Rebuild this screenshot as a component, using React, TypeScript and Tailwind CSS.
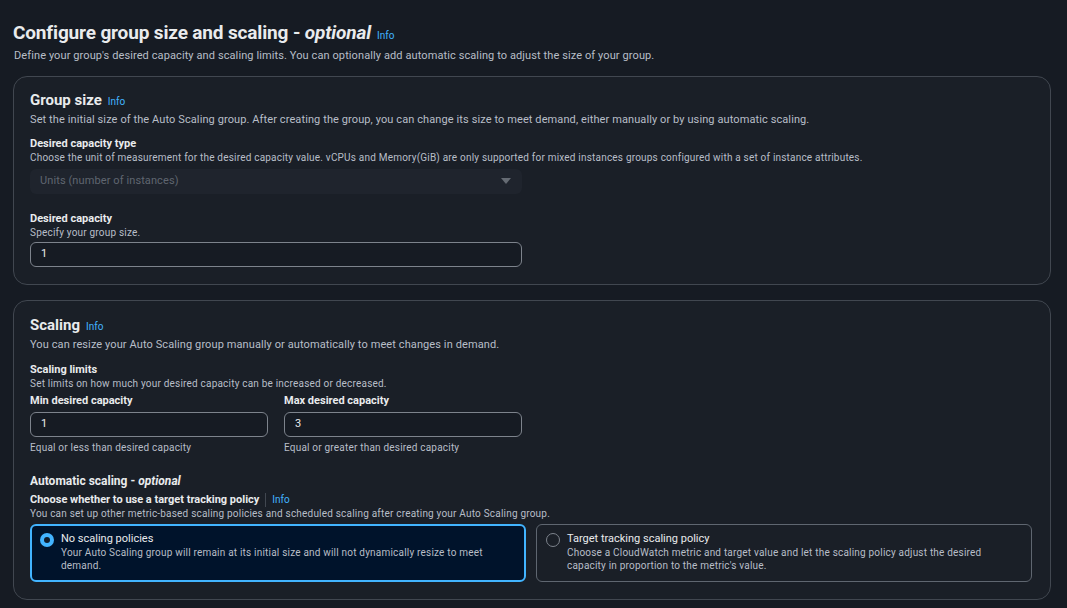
const font = { fontFamily: 'Roboto, "Open Sans", sans-serif' };

function Info() {
  return <span className="ml-[6px] text-[10px] font-normal text-[#42b4ff] tracking-normal">Info</span>;
}

function Field({ label, hint }: { label: string; hint?: string }) {
  return (
    <div>
      <div className="text-[11px] font-bold leading-[14px] text-[#e9ebed]">{label}</div>
      {hint && <div className="text-[10px] leading-[13px] tracking-[0.2px] text-[#b8bec7]">{hint}</div>}
    </div>
  );
}

function TextInput({ value, className }: { value: string; className?: string }) {
  return (
    <div
      className={
        'flex h-[25px] items-center rounded-[6px] border border-[#7d838c] bg-[#161b23] px-[10px] text-[11px] text-[#e9ebed] ' +
        (className ?? '')
      }
    >
      {value}
    </div>
  );
}

function Radio({ checked }: { checked: boolean }) {
  return checked ? (
    <span className="mt-[1px] flex h-[14px] w-[14px] shrink-0 items-center justify-center rounded-full bg-[#42b4ff]">
      <span className="h-[6px] w-[6px] rounded-full bg-[#0f1b2a]" />
    </span>
  ) : (
    <span className="mt-[1px] h-[14px] w-[14px] shrink-0 rounded-full border border-[#7d838c]" />
  );
}

export default function App() {
  return (
    <div style={font} className="min-h-screen bg-[#161b23] px-[13px] pt-[21px] pb-[8px]">
      <h1 className="flex items-baseline text-[19px] font-bold leading-[24px] tracking-[-0.15px] text-[#e9ebed]">
        Configure group size and scaling -&nbsp;<i className="font-bold">optional</i>
        <Info />
      </h1>
      <p className="mt-[1px] pl-[1px] text-[11px] leading-[14px] tracking-[0.1px] text-[#b8bec7]">
        Define your group's desired capacity and scaling limits. You can optionally add automatic scaling to adjust the size of your group.
      </p>

      <section className="mt-[13px] h-[209px] w-[1038px] rounded-[14px] border border-[#414750] bg-[#1a1f27] px-[16px] pt-[13px]">
        <h2 className="flex items-baseline text-[15px] font-bold leading-[20px] text-[#e9ebed]">
          Group size
          <Info />
        </h2>
        <p className="mt-[1px] text-[11px] leading-[14px] tracking-[0.1px] text-[#b8bec7]">
          Set the initial size of the Auto Scaling group. After creating the group, you can change its size to meet demand, either manually or by using automatic scaling.
        </p>

        <div className="mt-[10px]">
          <Field
            label="Desired capacity type"
            hint="Choose the unit of measurement for the desired capacity value. vCPUs and Memory(GiB) are only supported for mixed instances groups configured with a set of instance attributes."
          />
          <div className="mt-[5px] flex h-[25px] w-[492px] items-center justify-between rounded-[6px] bg-[#1f242d] pl-[10px] pr-[11px] text-[11px] tracking-[0.1px] text-[#5f6670]">
            <span>Units (number of instances)</span>
            <svg width="10" height="7" viewBox="0 0 10 7">
              <path d="M0 0h10L5 6z" fill="#656b73" />
            </svg>
          </div>
        </div>

        <div className="mt-[18px] w-[492px]">
          <Field label="Desired capacity" hint="Specify your group size." />
          <TextInput value="1" className="mt-[3px]" />
        </div>
      </section>

      <section className="mt-[15px] h-[300px] w-[1038px] rounded-[14px] border border-[#414750] bg-[#1a1f27] px-[16px] pt-[14px]">
        <h2 className="flex items-baseline text-[15px] font-bold leading-[20px] text-[#e9ebed]">
          Scaling
          <Info />
        </h2>
        <p className="mt-[1px] text-[11px] leading-[14px] tracking-[0.1px] text-[#b8bec7]">
          You can resize your Auto Scaling group manually or automatically to meet changes in demand.
        </p>

        <div className="mt-[11px]">
          <Field label="Scaling limits" hint="Set limits on how much your desired capacity can be increased or decreased." />
        </div>
        <div className="mt-[4px] grid w-[492px] grid-cols-2 gap-[16px]">
          <div>
            <Field label="Min desired capacity" />
            <TextInput value="1" className="mt-[4px]" />
            <div className="mt-[4px] text-[10px] leading-[13px] tracking-[0.2px] text-[#b8bec7]">Equal or less than desired capacity</div>
          </div>
          <div>
            <Field label="Max desired capacity" />
            <TextInput value="3" className="mt-[4px]" />
            <div className="mt-[4px] text-[10px] leading-[13px] tracking-[0.2px] text-[#b8bec7]">Equal or greater than desired capacity</div>
          </div>
        </div>

        <div className="mt-[19px] text-[12px] font-bold leading-[16px] text-[#e9ebed]">
          Automatic scaling - <i>optional</i>
        </div>
        <div className="mt-[4px] flex items-center text-[11px] font-bold leading-[14px] text-[#e9ebed]">
          Choose whether to use a target tracking policy
          <span className="mx-[6px] h-[14px] w-px bg-[#414750]" />
          <span className="text-[10px] font-normal text-[#42b4ff]">Info</span>
        </div>
        <p className="text-[10px] leading-[13px] tracking-[0.2px] text-[#b8bec7]">
          You can set up other metric-based scaling policies and scheduled scaling after creating your Auto Scaling group.
        </p>

        <div className="mt-[4px] grid w-[1002px] grid-cols-2 gap-[10px]">
          <div className="flex h-[58px] gap-[7px] rounded-[6px] border-2 border-[#42b4ff] bg-[#00132b] px-[8px] pt-[6px]">
            <Radio checked />
            <div>
              <div className="text-[11px] leading-[14px] text-[#e9ebed]">No scaling policies</div>
              <div className="pr-[20px] text-[10px] leading-[13px] tracking-[0.2px] text-[#b8bec7]">
                Your Auto Scaling group will remain at its initial size and will not dynamically resize to meet demand.
              </div>
            </div>
          </div>
          <div className="flex h-[58px] gap-[7px] rounded-[6px] border border-[#5f6670] bg-[#1a1f27] px-[9px] pt-[7px]">
            <Radio checked={false} />
            <div>
              <div className="text-[11px] leading-[14px] text-[#e9ebed]">Target tracking scaling policy</div>
              <div className="pr-[20px] text-[10px] leading-[13px] tracking-[0.2px] text-[#b8bec7]">
                Choose a CloudWatch metric and target value and let the scaling policy adjust the desired capacity in proportion to the metric's value.
              </div>
            </div>
          </div>
        </div>
      </section>
    </div>
  );
}
